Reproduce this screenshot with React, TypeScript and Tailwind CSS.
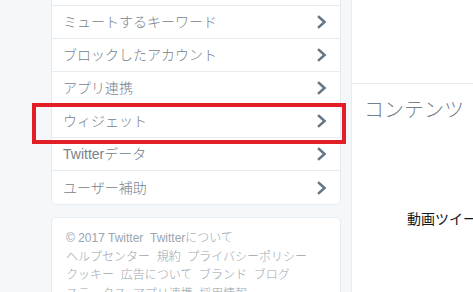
import React from 'react';

const font = { fontFamily: '"Liberation Sans", "Noto Sans CJK JP", sans-serif' };

const items = ['プライバシーとセキュリティ', 'ミュートするキーワード', 'ブロックしたアカウント', 'アプリ連携', 'ウィジェット', 'Twitterデータ', 'ユーザー補助'];

const Chevron = () => (
  <svg width="10" height="14" viewBox="0 0 10 14" className="shrink-0">
    <path d="M2 2 L7.5 7 L2 12" fill="none" stroke="#657786" strokeWidth="2.6" strokeLinecap="square" />
  </svg>
);

export default function App() {
  return (
    <div className="relative w-[473px] h-[292px] overflow-hidden bg-[#f5f8fa]" style={font}>
      <div className="flex pl-[51px] gap-[10px]">
        <div className="w-[290px] shrink-0 flex flex-col gap-[12px]">
          <div className="-mt-[28px] bg-white border border-[#e6ecf0] rounded-[5px]">
            {items.map((label, i) => (
              <div
                key={label}
                className={`h-[33px] flex items-center justify-between pl-[11px] pr-[13px] ${i < items.length - 1 ? 'border-b border-[#e6ecf0]' : ''}`}
              >
                <span className="text-[14px] text-[#77818a] leading-none font-light">{label}</span>
                <Chevron />
              </div>
            ))}
          </div>
          <div className="bg-white border border-[#e6ecf0] rounded-[5px] pt-[11px] px-[14px] pb-4 text-[12px] leading-[18.5px] text-[#9aa5ae] whitespace-nowrap font-light">
            <div>© 2017 Twitter&nbsp;&nbsp;Twitterについて</div>
            <div>ヘルプセンター&nbsp;&nbsp;規約&nbsp;&nbsp;プライバシーポリシー</div>
            <div>クッキー&nbsp;&nbsp;広告について&nbsp;&nbsp;ブランド&nbsp;&nbsp;ブログ</div>
            <div>ステータス&nbsp;&nbsp;アプリ連携&nbsp;&nbsp;採用情報</div>
          </div>
        </div>
        <div className="flex-1 bg-white min-h-[292px] border-l border-[#e6ecf0]">
          <div className="h-[84px] border-b border-[#e6ecf0]" />
          <div className="pl-[12px] pt-[16px] text-[20px] leading-none text-[#77818a] font-light">コンテンツ</div>
          <div className="flex justify-end mt-[22px]">
            <div className="w-[3px] h-[11px] border border-[#3b88c3] bg-[#cfe3f5]" />
          </div>
          <div className="pl-[55px] mt-[59px] text-[14px] leading-none text-[#14171a] whitespace-nowrap">動画ツイート</div>
        </div>
      </div>
      <div className="absolute left-[32px] top-[103px] w-[314px] h-[41px] border-[4px] border-[#e21f26]" />
    </div>
  );
}
